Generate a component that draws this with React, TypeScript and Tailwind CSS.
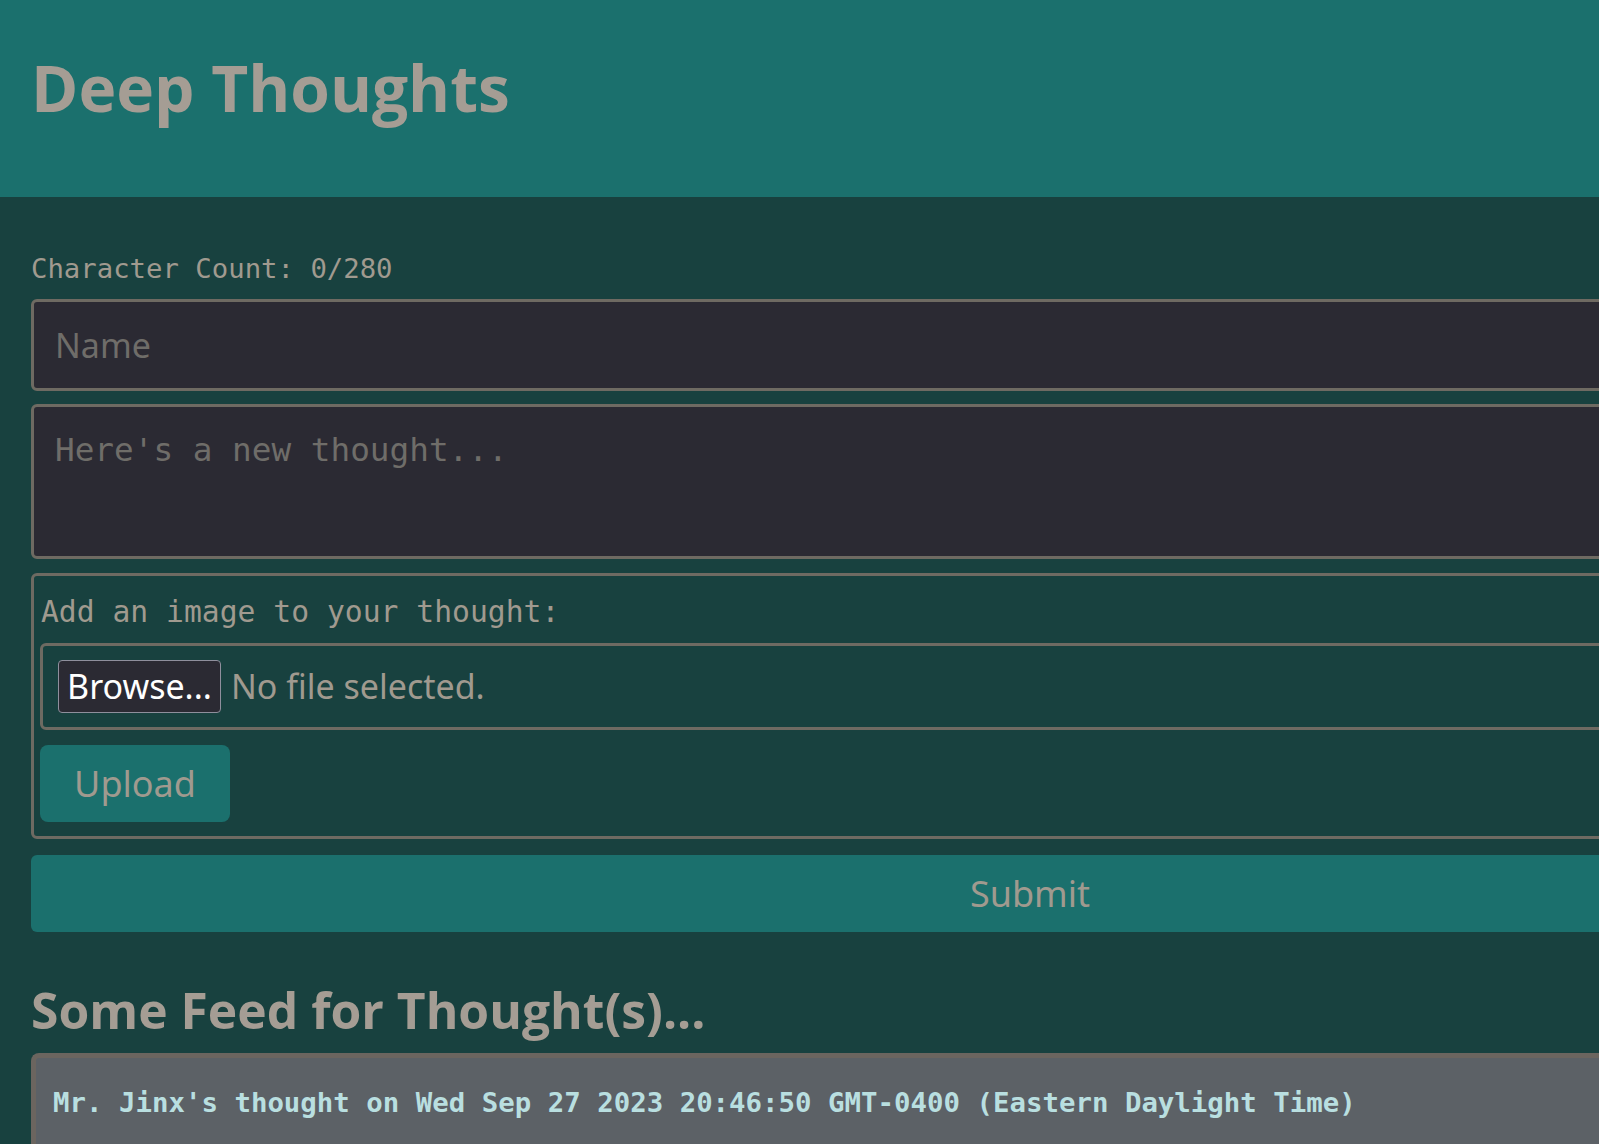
const sans = "font-['Noto_Sans',sans-serif]";
const mono = "font-['DejaVu_Sans_Mono',monospace]";
const heading = "font-['Open_Sans',sans-serif]";

function Header() {
  return (
    <header className="h-[197px] bg-[#1b706d] pl-[31px] pt-[56px]">
      <h1 className={`${heading} text-[64px] leading-none font-bold text-[#a59d94]`}>Deep Thoughts</h1>
    </header>
  );
}

function ThoughtForm() {
  return (
    <form className="flex w-[1998px] flex-col" onSubmit={(e) => e.preventDefault()}>
      <p className={`${mono} text-[27.3px] leading-none text-[#a09a8f]`}>Character Count: 0/280</p>

      <input
        placeholder="Name"
        className={`${sans} mt-[17px] h-[92px] rounded-[6px] border-[3px] border-[#6e6a62] bg-[#2b2a33] px-[21px] text-[34px] text-[#a09a8f] outline-none placeholder:text-[#6f6d69]`}
      />

      <textarea
        placeholder="Here's a new thought..."
        className={`${mono} mt-[13px] h-[155px] resize-none rounded-[6px] border-[3px] border-[#6e6a62] bg-[#2b2a33] px-[21px] pt-[24px] text-[32.7px] leading-[1.2] text-[#a09a8f] outline-none placeholder:text-[#6f6d69]`}
      />

      <div className="mt-[14px] flex flex-col rounded-[6px] border-[3px] border-[#6e6a62] px-[6px] pt-[21px] pb-[14px]">
        <label className={`${mono} ml-px text-[29.7px] leading-none text-[#a09a8f]`}>Add an image to your thought:</label>
        <div className="mt-[16px] flex h-[87px] items-start rounded-[6px] border-[3px] border-[#6e6a62] pl-[15px] pt-[14px]">
          <span className={`${sans} flex h-[53px] w-[163px] items-center justify-center rounded-[4px] border border-[#8f8f9d] bg-[#2b2a33] text-[34px] text-white`}>
            Browse...
          </span>
          <span className={`${sans} ml-[10px] flex h-[53px] items-center text-[34px] text-[#a09a8f]`}>No file selected.</span>
        </div>
        <button
          type="button"
          className={`${sans} mt-[15px] h-[77px] w-[190px] rounded-[8px] bg-[#1b706d] text-[36px] text-[#a09a8f]`}
        >
          Upload
        </button>
      </div>

      <button type="submit" className={`${sans} mt-[16px] h-[77px] rounded-[6px] bg-[#1b706d] text-[36px] text-[#a09a8f]`}>
        Submit
      </button>
    </form>
  );
}

function Feed() {
  return (
    <section className="mt-[54px] w-[1998px]">
      <h2 className={`${heading} text-[49.8px] leading-none font-bold text-[#a59d94]`}>Some Feed for Thought(s)...</h2>
      <div className="mt-[17px] h-[200px] rounded-[8px] border-t-[5px] border-l-[5px] border-[#6b655f] bg-[#5c6166] pl-[17px] pt-[31px]">
        <p className={`${mono} text-[27.4px] leading-none font-bold text-[#b9dfe0]`}>
          Mr. Jinx's thought on Wed Sep 27 2023 20:46:50 GMT-0400 (Eastern Daylight Time)
        </p>
      </div>
    </section>
  );
}

export default function App() {
  return (
    <div className="min-h-screen overflow-hidden bg-[#18413f]">
      <Header />
      <main className="pl-[31px] pt-[58px]">
        <ThoughtForm />
        <Feed />
      </main>
    </div>
  );
}
